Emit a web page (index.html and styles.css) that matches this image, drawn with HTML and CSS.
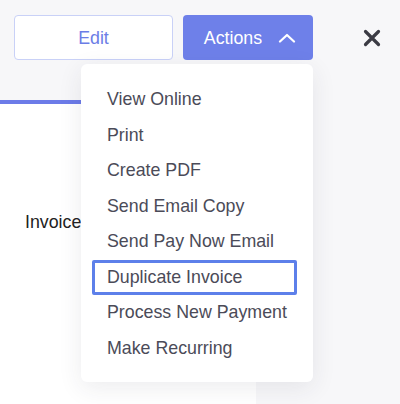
FILE: index.html
```html
<!DOCTYPE html>
<html lang="en">
<head>
    <meta charset="UTF-8">
    <meta name="viewport" content="width=device-width, initial-scale=1.0">
    <title>Invoice Actions</title>
    <link rel="stylesheet" href="styles.css">
</head>
<body>
    <div class="page">
        <div class="toolbar">
            <button class="btn btn-edit">Edit</button>

            <div class="actions">
                <button class="btn btn-actions">
                    Actions
                    <svg class="chevron" width="18" height="10" viewBox="0 0 18 10">
                        <path d="M2 8.5 L9 2 L16 8.5" fill="none" stroke="#fff" stroke-width="2.2" stroke-linecap="round" stroke-linejoin="round"/>
                    </svg>
                </button>

                <ul class="menu">
                    <li class="menu-item">View Online</li>
                    <li class="menu-item">Print</li>
                    <li class="menu-item">Create PDF</li>
                    <li class="menu-item">Send Email Copy</li>
                    <li class="menu-item">Send Pay Now Email</li>
                    <li class="menu-item focused">Duplicate Invoice</li>
                    <li class="menu-item">Process New Payment</li>
                    <li class="menu-item">Make Recurring</li>
                </ul>
            </div>

            <button class="btn-close" aria-label="Close">
                <svg width="18" height="18" viewBox="0 0 18 18">
                    <path d="M2.5 2.5 L15.5 15.5 M15.5 2.5 L2.5 15.5" stroke="#3b3b44" stroke-width="3.2" stroke-linecap="round"/>
                </svg>
            </button>
        </div>

        <div class="panel">
            <div class="panel-label">Invoice</div>
        </div>
    </div>
</body>
</html>
```

FILE: styles.css
```css
html, body {
    margin: 0;
    height: 100%;
}

body {
    font-family: 'Liberation Sans', Arial, sans-serif;
    background: #f7f7f9;
}

.page {
    display: flex;
    flex-direction: column;
    height: 100%;
}

.toolbar {
    display: flex;
    align-items: center;
    gap: 10px;
    padding: 15px 0 0 14px;
    height: 45px;
}

.btn {
    height: 45px;
    padding-top: 2px;
    border-radius: 4px;
    font-family: inherit;
    font-size: 17.8px;
    cursor: pointer;
}

.btn-edit {
    width: 159px;
    background: #fff;
    border: 1px solid #c9d1f7;
    color: #6b7de6;
}

.actions {
    position: relative;
}

.btn-actions {
    width: 130px;
    display: flex;
    align-items: center;
    justify-content: center;
    gap: 16px;
    padding: 2px 0 0 4px;
    background: #6e80e9;
    border: none;
    color: #fff;
}

.chevron {
    margin-top: -2px;
}

.btn-close {
    margin-left: 35px;
    width: 28px;
    height: 28px;
    padding: 0;
    display: flex;
    align-items: center;
    justify-content: center;
    background: none;
    border: none;
    cursor: pointer;
}

.menu {
    position: absolute;
    top: 49px;
    right: 0;
    z-index: 2;
    width: 232px;
    margin: 0;
    padding: 18px 0 16px;
    list-style: none;
    background: #fff;
    border-radius: 6px;
    box-shadow: 0 6px 24px rgba(40, 40, 70, 0.09);
}

.menu-item {
    height: 35.5px;
    box-sizing: border-box;
    display: flex;
    align-items: center;
    margin: 0 16px 0 11px;
    padding-left: 13px;
    border: 2px solid transparent;
    border-radius: 2px;
    font-size: 17.8px;
    color: #4b4b58;
    white-space: nowrap;
}

.menu-item.focused {
    border: 3px solid #5d80ea;
    padding-left: 12px;
}

.panel {
    flex: 1;
    width: 256px;
    margin-top: 40px;
    background: #fff;
    border-top: 4px solid #6c7be8;
}

.panel-label {
    padding: 108px 0 0 25px;
    font-size: 17.8px;
    line-height: 20px;
    color: #222;
}
```
